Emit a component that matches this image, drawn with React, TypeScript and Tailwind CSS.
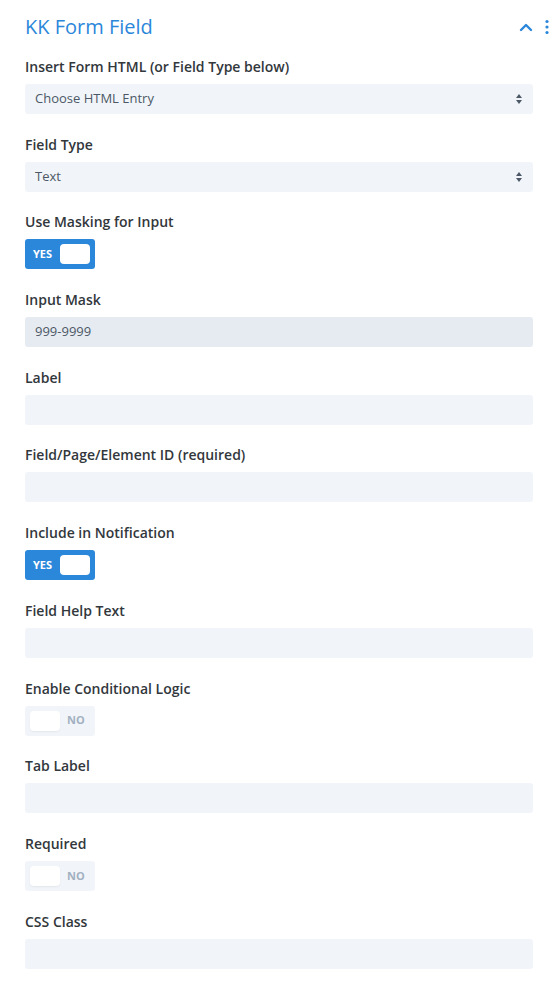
import React from "react";

const F = { fontFamily: '"Open Sans", "Noto Sans", sans-serif' };

function Label({ children }: { children: React.ReactNode }) {
  return (
    <div className="h-[18px] leading-[18px] text-[14px] font-semibold text-[#32373c] mb-2">{children}</div>
  );
}

function Select({ value }: { value: string }) {
  return (
    <div className="h-[30px] rounded-[3px] bg-[#f1f5f9] flex items-center justify-between pl-[10px] pr-[10px]">
      <span className="text-[13px] text-[#4c5866]">{value}</span>
      <svg width="8" height="12" viewBox="0 0 8 12">
        <path d="M4 1 L7 5 L1 5 Z" fill="#4c5866" />
        <path d="M4 11 L7 7 L1 7 Z" fill="#4c5866" />
      </svg>
    </div>
  );
}

function Input({ value, dark }: { value?: string; dark?: boolean }) {
  return (
    <div className={`h-[30px] rounded-[3px] flex items-center pl-[10px] ${dark ? "bg-[#e6ebf2]" : "bg-[#f1f5f9]"}`}>
      {value && <span className="text-[13px] text-[#4c5866]">{value}</span>}
    </div>
  );
}

function Toggle({ on }: { on: boolean }) {
  if (on)
    return (
      <div className="w-[70px] h-[30px] rounded-[3px] bg-[#2b87da] flex items-center justify-between pl-[8px] pr-[5px]">
        <span className="text-[11px] font-bold text-white">YES</span>
        <div className="w-[30px] h-[20px] rounded-[4px] bg-white" />
      </div>
    );
  return (
    <div className="w-[70px] h-[30px] rounded-[3px] bg-[#f1f5f9] flex items-center pl-[5px]">
      <div className="w-[30px] h-[20px] rounded-[4px] bg-white shadow-[0_1px_2px_rgba(0,0,0,0.06)]" />
      <span className="ml-[7px] text-[11px] font-bold text-[#a2b0c1]">NO</span>
    </div>
  );
}

function Section({ label, children }: { label: string; children: React.ReactNode }) {
  return (
    <div className="mb-[21.7px]">
      <Label>{label}</Label>
      {children}
    </div>
  );
}

export default function App() {
  return (
    <div style={F} className="w-[558px] min-h-[999px] bg-white pl-[25px] pr-[25px]">
      <div className="h-[58px] flex items-start justify-between pt-[13px] relative">
        <div className="text-[20px] leading-[28px] text-[#2b87da]">KK Form Field</div>
        <div className="absolute right-[-16px] top-[19px] flex items-center gap-[12px]">
          <svg width="14" height="10" viewBox="0 0 14 10">
            <path d="M2 8 L7 3 L12 8" stroke="#2b87da" strokeWidth="2.4" fill="none" strokeLinecap="round" strokeLinejoin="round" />
          </svg>
          <svg width="4" height="16" viewBox="0 0 4 16">
            <circle cx="2" cy="2.5" r="1.6" fill="#2b87da" />
            <circle cx="2" cy="8" r="1.6" fill="#2b87da" />
            <circle cx="2" cy="13.5" r="1.6" fill="#2b87da" />
          </svg>
        </div>
      </div>
      <Section label="Insert Form HTML (or Field Type below)"><Select value="Choose HTML Entry" /></Section>
      <Section label="Field Type"><Select value="Text" /></Section>
      <Section label="Use Masking for Input"><Toggle on /></Section>
      <Section label="Input Mask"><Input value="999-9999" dark /></Section>
      <Section label="Label"><Input /></Section>
      <Section label="Field/Page/Element ID (required)"><Input /></Section>
      <Section label="Include in Notification"><Toggle on /></Section>
      <Section label="Field Help Text"><Input /></Section>
      <Section label="Enable Conditional Logic"><Toggle on={false} /></Section>
      <Section label="Tab Label"><Input /></Section>
      <Section label="Required"><Toggle on={false} /></Section>
      <Section label="CSS Class"><Input /></Section>
    </div>
  );
}
